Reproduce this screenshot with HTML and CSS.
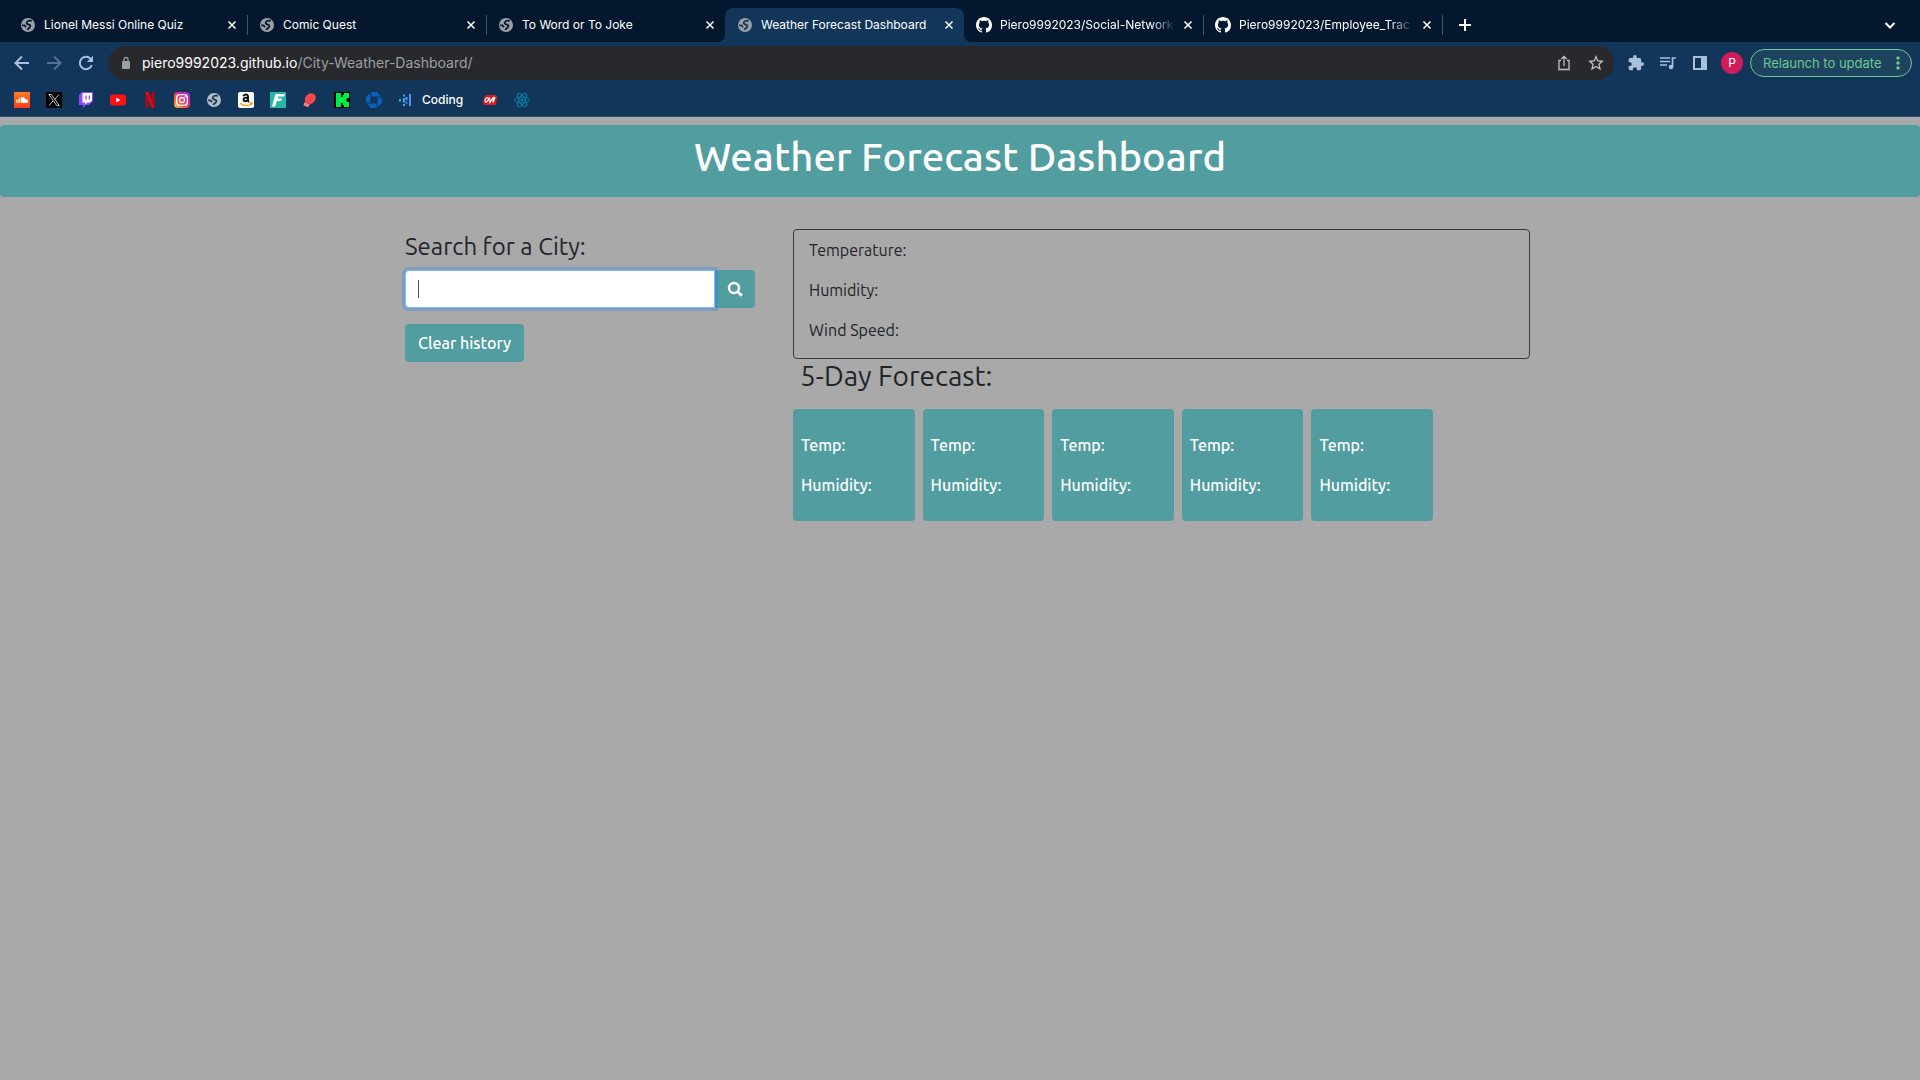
FILE: index.html
```html
<!DOCTYPE html>
<html lang="en">
<head>
<meta charset="utf-8">
<meta name="viewport" content="width=device-width, initial-scale=1">
<title>Weather Forecast Dashboard</title>
<link rel="stylesheet" href="styles.css">
</head>
<body>
<svg class="defs" aria-hidden="true">
  <symbol id="globe" viewBox="0 0 14 14"><circle cx="7" cy="7" r="7" fill="currentColor"/><path class="land" d="M10.800 2.900C8.500 2.300 6.200 3 5.700 4.500C5.400 6 6.800 6.400 8 6.600C9.700 7 9.800 8.300 8.800 9.400C7.900 10.400 6.800 10.700 6.400 12M1.200 7.300H3.500L5 9.300" fill="none" stroke-width="1.700"/></symbol>
  <symbol id="close" viewBox="0 0 10 10"><path d="M1.500 1.500l7 7m0-7l-7 7" fill="none" stroke="currentColor" stroke-width="1.500"/></symbol>
  <symbol id="github" viewBox="0 0 16 16"><path fill="currentColor" d="M8 0C3.580 0 0 3.580 0 8c0 3.540 2.290 6.530 5.470 7.590.4.070.550-.170.550-.380 0-.190-.010-.820-.010-1.490-2.010.370-2.530-.490-2.690-.940-.090-.230-.480-.940-.820-1.130-.280-.150-.680-.520-.010-.530.630-.010 1.080.580 1.230.820.720 1.210 1.870.870 2.330.660.070-.520.280-.870.510-1.070-1.780-.200-3.640-.890-3.640-3.950 0-.870.310-1.590.820-2.150-.080-.200-.360-1.020.080-2.120 0 0 .670-.210 2.200.820.640-.180 1.320-.270 2-.270s1.360.090 2 .270c1.530-1.040 2.200-.820 2.200-.820.440 1.100.160 1.920.080 2.120.510.560.820 1.270.820 2.150 0 3.070-1.870 3.750-3.650 3.950.290.250.540.730.540 1.480 0 1.070-.010 1.930-.010 2.200 0 .210.150.460.550.380A8.010 8.010 0 0 0 16 8c0-4.420-3.580-8-8-8z"/></symbol>
</svg>

<header class="chrome">
  <nav class="tabs" aria-label="Tabs">
    <div class="tab"><svg class="fav globe"><use href="#globe"/></svg><span class="tab-title">Lionel Messi Online Quiz</span><button class="tab-close" aria-label="Close tab"><svg><use href="#close"/></svg></button></div>
    <div class="tab"><svg class="fav globe"><use href="#globe"/></svg><span class="tab-title">Comic Quest</span><button class="tab-close" aria-label="Close tab"><svg><use href="#close"/></svg></button></div>
    <div class="tab before-active"><svg class="fav globe"><use href="#globe"/></svg><span class="tab-title">To Word or To Joke</span><button class="tab-close" aria-label="Close tab"><svg><use href="#close"/></svg></button></div>
    <div class="tab active"><svg class="fav globe"><use href="#globe"/></svg><span class="tab-title">Weather Forecast Dashboard</span><button class="tab-close" aria-label="Close tab"><svg><use href="#close"/></svg></button></div>
    <div class="tab"><svg class="fav"><use href="#github"/></svg><span class="tab-title long">Piero9992023/Social-Network</span><button class="tab-close" aria-label="Close tab"><svg><use href="#close"/></svg></button></div>
    <div class="tab"><svg class="fav"><use href="#github"/></svg><span class="tab-title long">Piero9992023/Employee_Trac</span><button class="tab-close" aria-label="Close tab"><svg><use href="#close"/></svg></button></div>
    <button class="new-tab" aria-label="New tab"><svg viewBox="0 0 14 14"><path d="M7 1v12M1 7h12" stroke="currentColor" stroke-width="2"/></svg></button>
    <button class="tab-search" aria-label="Search tabs"><svg viewBox="0 0 12 12"><path d="M1.500 4L6 8.500 10.500 4" fill="none" stroke="currentColor" stroke-width="2"/></svg></button>
  </nav>

  <div class="toolbar">
    <button class="nav-btn" aria-label="Back"><svg viewBox="0 0 16 16"><path d="M15 8H2M8 1.500L1.500 8 8 14.500" fill="none" stroke="currentColor" stroke-width="2"/></svg></button>
    <button class="nav-btn dim" aria-label="Forward"><svg viewBox="0 0 16 16"><path d="M1 8h13M8 1.500L14.500 8 8 14.500" fill="none" stroke="currentColor" stroke-width="2"/></svg></button>
    <button class="nav-btn" aria-label="Reload"><svg viewBox="0 0 16 16"><path d="M13.800 10.200A6.200 6.200 0 1 1 12.600 3.800" fill="none" stroke="currentColor" stroke-width="2"/><path d="M15 0.800V7H8.800Z" fill="currentColor"/></svg></button>
    <div class="address">
      <svg class="lock" viewBox="0 0 10 14"><rect x="1" y="5" width="8" height="8" rx="1" fill="currentColor"/><path d="M3 5V3.500a2 2 0 0 1 4 0V5" fill="none" stroke="currentColor" stroke-width="1.300"/></svg>
      <span class="url">piero9992023.github.io<span class="path">/City-Weather-Dashboard/</span></span>
      <button class="addr-btn" aria-label="Share"><svg viewBox="0 0 16 16"><path d="M5 5.500H3v9h10v-9h-2M8 11V1.500M5.300 4L8 1.400 10.700 4" fill="none" stroke="currentColor" stroke-width="1.300"/></svg></button>
      <button class="addr-btn" aria-label="Bookmark this page"><svg viewBox="2 2 20 20"><path fill="currentColor" d="M22 9.240l-7.190-.62L12 2 9.190 8.630 2 9.240l5.460 4.730L5.820 21 12 17.270 18.180 21l-1.630-7.030L22 9.240zM12 15.400l-3.760 2.270 1-4.280-3.320-2.880 4.380-.38L12 6.100l1.710 4.040 4.380.38-3.320 2.880 1 4.280L12 15.400z"/></svg></button>
    </div>
    <div class="actions">
      <button class="nav-btn" aria-label="Extensions"><svg viewBox="1 1 22 22"><path fill="currentColor" d="M20.500 11H19V7c0-1.100-.9-2-2-2h-4V3.500a2.500 2.500 0 0 0-5 0V5H4c-1.100 0-2 .9-2 2v3.800h1.500c1.500 0 2.700 1.200 2.700 2.700S5 16.200 3.500 16.200H2V20c0 1.100.9 2 2 2h3.800v-1.500c0-1.500 1.200-2.700 2.700-2.700s2.700 1.200 2.700 2.700V22H17c1.100 0 2-.9 2-2v-4h1.500a2.500 2.500 0 0 0 0-5z"/></svg></button>
      <button class="nav-btn" aria-label="Media controls"><svg viewBox="0 0 16 16"><path d="M0 3h10M0 6.500h10M0 10h7M12.500 12V3H16" fill="none" stroke="currentColor" stroke-width="1.700"/><circle cx="11" cy="12" r="2.300" fill="currentColor"/></svg></button>
      <button class="nav-btn" aria-label="Side panel"><svg viewBox="0 0 16 16"><path fill="currentColor" fill-rule="evenodd" d="M1 1h14v14H1ZM3 3v10h6V3Z"/></svg></button>
      <button class="avatar" aria-label="Profile">P</button>
      <button class="relaunch">Relaunch to update<svg viewBox="0 0 4 14"><g fill="currentColor"><circle cx="2" cy="2" r="1.700"/><circle cx="2" cy="7" r="1.700"/><circle cx="2" cy="12" r="1.700"/></g></svg></button>
    </div>
  </div>

  <nav class="bookmarks" aria-label="Bookmarks">
    <a href="#" aria-label="SoundCloud"><svg viewBox="0 0 16 16"><defs><linearGradient id="sc" x2="0" y2="1"><stop stop-color="#ff7d26"/><stop offset="1" stop-color="#ff3a12"/></linearGradient></defs><path fill="url(#sc)" d="M0 0h16v16H0z"/><path d="M2.500 8v2.500M4.200 7v4M5.900 6v5" stroke="#fff"/><path fill="#fff" d="M7 5.300C9 4.200 11 5.500 11.200 7.300 13 6.700 14 8 14 9.200S13 11 12 11H7Z"/></svg></a>
    <a href="#" aria-label="X"><svg viewBox="0 0 16 16"><path d="M0 0h16v16H0z"/><path d="M2.800 2.500h2.500l8 11h-2.500ZM13 2.500L8.800 7.300M7 9L3 13.500" fill="none" stroke="#ddd" stroke-width=".9"/></svg></a>
    <a href="#" aria-label="Twitch"><svg viewBox="0 0 16 16"><path fill="#9146ff" d="M4 0L1 3v10h4v3l3-3h3l4-4V0Z"/><path fill="#fff" d="M4.500 1H14v7.500L12 10.500H9.500L7 12.500v-2H4.500Z"/><path d="M8 3.500v4M11.300 3.500v4" stroke="#9146ff" stroke-width="1.300"/></svg></a>
    <a href="#" aria-label="YouTube"><svg viewBox="0 0 16 16"><rect y="2.500" width="16" height="11" rx="3" fill="#f11"/><path fill="#fff" d="M6.300 5.700v4.600L10.600 8Z"/></svg></a>
    <a href="#" aria-label="Netflix"><svg viewBox="0 0 16 16"><path fill="#a70d16" d="M3.500 0h3v15.600l-3 .4ZM9.500 0h3v16l-3-.4Z"/><path fill="#e50914" d="M3.500 0h3l6 16-3-.4Z"/></svg></a>
    <a href="#" aria-label="Instagram"><svg viewBox="0 0 16 16"><defs><linearGradient id="ig" x1="0" y1="1" x2="1" y2="0"><stop stop-color="#ffc83d"/><stop offset=".35" stop-color="#ff543f"/><stop offset=".65" stop-color="#e02597"/><stop offset="1" stop-color="#8134ef"/></linearGradient></defs><rect width="16" height="16" rx="4" fill="url(#ig)"/><g fill="none" stroke="#fff" stroke-width="1.300"><rect x="2.700" y="2.700" width="10.600" height="10.600" rx="3"/><circle cx="8" cy="8" r="2.500"/></g><circle cx="11.200" cy="4.800" r=".7" fill="#fff"/></svg></a>
    <a href="#" aria-label="Website"><svg class="world" viewBox="-1 -1 16 16"><use href="#globe" width="14" height="14"/></svg></a>
    <a href="#" aria-label="Amazon"><svg viewBox="0 0 16 16"><rect width="16" height="16" rx="2" fill="#fff"/><path d="M5.300 4.300C6 2 10 1.700 10 4.500V8c0 1 .3 1.300 1 2M10 5.500C7 5.500 5.500 6.200 5.500 7.800s3 2.200 4.400-.3" fill="none" stroke="#111" stroke-width="1.900"/><path d="M2 11.200c4 3 8.500 2.800 11.500.8M12 11l2-.2-.5 2" fill="none" stroke="#f90" stroke-width="1.300"/></svg></a>
    <a href="#" aria-label="Fiverr"><svg viewBox="0 0 16 16"><path fill="#25b8a4" d="M0 0h16v16H0z"/><path fill="#fff" d="M5.500 2H15l-1 2.500H8.500L7.900 6.500H12l-1 2.500H7L5 14.500H2Z"/></svg></a>
    <a href="#" aria-label="Boxing"><svg viewBox="0 0 16 16"><path fill="#f6494d" d="M3.500 5C5 1.500 9.500.3 12 2c2.500 1.800 2.300 6-.3 8.200-1.200 1-2 1.500-3.200 1.800L4 10.500C2.300 9 2.600 6.800 3.500 5Z"/><path fill="#ff7774" d="M2.500 10l5.500 2.200-2 3L1.500 13.500Z"/><path d="M6 5c2 1 4-.5 5 1M5 7.500c1.500.5 3 0 4 .5" fill="none" stroke="#d43843" stroke-width=".7"/></svg></a>
    <a href="#" aria-label="Kick"><svg viewBox="0 0 16 16"><path d="M0 0h16v16H0z"/><path fill="#00ed45" d="M2 1h5v4h1.500V3H10V1h5v5h-2v1.500h-1v1h1V10h2v5h-5v-2H8.500v-2H7v4H2Z"/></svg></a>
    <a href="#" aria-label="Chase"><svg viewBox="0 0 16 16"><g fill="#0b60bb"><path d="M5.500 0H11l4 4.500H5.500Z"/><path d="M16 5.500V11l-4.500 4V5.500Z"/><path d="M10.500 16H5l-4-4.500h9.500Z"/><path d="M0 10.500V5l4.500-4v9.500Z"/></g></svg></a>
    <a href="#" class="labelled"><svg viewBox="0 0 16 16"><g fill="none" stroke-width="2"><path stroke="#28b5e8" d="M2 7v2.500M6 2.500v2M6 6v4.500M6 12v2"/><path stroke="#5c9cff" d="M8.500 5v3"/><path stroke="#367adf" d="M8.500 9.500v2.500"/><path stroke="#5c8cf5" d="M12 2v12"/></g></svg>Coding</a>
    <a href="#" aria-label="Mega"><svg viewBox="0 0 16 16"><path fill="#d91c24" d="M4 3h10l1 2-1 8H9L2 13 1 11 2 5Z"/><path d="M6 7C6 5 3 6 3 8.500S5.500 11 7.500 5.500L8 10.500 11.500 5l-.5 5.500M13 5l-2 5.500" fill="none" stroke="#fff" stroke-width="1.200"/></svg></a>
    <a href="#" aria-label="React"><svg viewBox="0 0 16 16"><g fill="none" stroke="#087ea4"><ellipse cx="8" cy="8" rx="7.500" ry="3"/><ellipse cx="8" cy="8" rx="7.500" ry="3" transform="rotate(60 8 8)"/><ellipse cx="8" cy="8" rx="7.500" ry="3" transform="rotate(120 8 8)"/></g><circle cx="8" cy="8" r="1.500" fill="#087ea4"/></svg></a>
  </nav>
</header>

<main class="page">
  <div class="banner"><h1>Weather Forecast Dashboard</h1></div>
  <div class="container">
    <section class="search">
      <label class="search-label" for="city">Search for a City:</label>
      <div class="input-group">
        <input id="city" type="text" autocomplete="off">
        <span class="caret"></span>
        <button class="btn search-btn" aria-label="Search"><svg viewBox="0 0 16 16"><circle cx="7" cy="7" r="5" fill="none" stroke="currentColor" stroke-width="2.400"/><path d="M10.500 10.500l4.300 4.300" stroke="currentColor" stroke-width="2.800"/></svg></button>
      </div>
      <button class="btn clear-btn">Clear history</button>
    </section>
    <section class="weather">
      <div class="current">
        <p>Temperature:</p>
        <p>Humidity:</p>
        <p>Wind Speed:</p>
      </div>
      <h2>5-Day Forecast:</h2>
      <div class="forecast">
        <div class="day"><p>Temp:</p><p>Humidity:</p></div>
        <div class="day"><p>Temp:</p><p>Humidity:</p></div>
        <div class="day"><p>Temp:</p><p>Humidity:</p></div>
        <div class="day"><p>Temp:</p><p>Humidity:</p></div>
        <div class="day"><p>Temp:</p><p>Humidity:</p></div>
      </div>
    </section>
  </div>
</main>
</body>
</html>
```
FILE: styles.css
```css
* { box-sizing: border-box; }

body {
  margin: 0;
  min-height: 100vh;
  background: #a9a9a9;
  color: #212529;
  font: 16px/24px Ubuntu, "Noto Sans", sans-serif;
}

h1, h2, p { margin: 0; }
.defs { display: none; }

button {
  margin: 0;
  padding: 0;
  border: 0;
  background: none;
  color: inherit;
  font: inherit;
}

svg { display: block; flex: none; }

/* Browser frame */
.chrome {
  background: #12355a;
  border-bottom: 1px solid #2d4d74;
  color: #fff;
  font: 12px/16px Inter, sans-serif;
}

.tabs {
  display: flex;
  height: 42px;
  padding: 8px 24px 0 8px;
  background: #03182e;
}

.tab {
  position: relative;
  display: flex;
  align-items: center;
  flex: 0 1 239px;
  min-width: 0;
  height: 34px;
  padding: 0 10px 0 12px;
  gap: 8px;
}

.tab::after {
  content: "";
  position: absolute;
  right: -1px;
  top: 7px;
  width: 1px;
  height: 20px;
  background: #465467;
}

.tab.before-active::after { display: none; }

.tab.active {
  background: #12355a;
  border-radius: 8px 8px 0 0;
}

/* Curved feet that join the active tab to the toolbar */
.tab.active::before, .tab.active::after {
  content: "";
  position: absolute;
  top: auto;
  bottom: 0;
  width: 8px;
  height: 8px;
}

.tab.active::before { left: -8px; background: radial-gradient(circle at 0 0, transparent 8px, #12355a 8px); }
.tab.active::after { right: -8px; background: radial-gradient(circle at 100% 0, transparent 8px, #12355a 8px); }

.fav { width: 16px; height: 16px; }
.fav.globe { padding: 1px; color: #9aa0a6; }
.land { stroke: var(--cut, #03182e); }
.active .fav, .world { --cut: #12355a; }

.tab-title {
  flex: 1;
  min-width: 0;
  overflow: hidden;
  white-space: nowrap;
}

.tab-title.long { mask-image: linear-gradient(to right, #000 calc(100% - 24px), transparent); }

.tab-close svg { width: 10px; height: 10px; }
.new-tab { padding: 0 16px; }
.new-tab svg { width: 14px; height: 14px; }
.tab-search { margin-left: auto; }
.tab-search svg { width: 12px; height: 12px; }

.toolbar {
  display: flex;
  align-items: center;
  gap: 16px;
  padding: 4px 8px 4px 14px;
}

.nav-btn { color: #a8c0dc; }
.nav-btn svg { width: 16px; height: 16px; }
.nav-btn.dim { color: #55718f; }

.address {
  display: flex;
  align-items: center;
  flex: 1;
  min-width: 0;
  height: 34px;
  margin: 0 -2px;
  padding: 0 10px 0 12px;
  border-radius: 17px;
  background: #28292c;
  font-size: 14px;
}

.lock { width: 12px; height: 14px; color: #9aa0a6; }
.url { flex: 1; min-width: 0; margin-left: 10px; overflow: hidden; white-space: nowrap; }
.path { color: #9aa0a6; }
.addr-btn { margin-left: 16px; color: #c0c1c3; }
.addr-btn svg { width: 16px; height: 16px; }

.actions { display: flex; align-items: center; gap: 16px; }

.avatar {
  width: 22px;
  height: 22px;
  margin: 0 -9px 0 -3px;
  border-radius: 11px;
  background: #d01c5b;
}

.relaunch {
  display: flex;
  align-items: center;
  justify-content: space-between;
  width: 162px;
  height: 28px;
  padding: 0 11px 0 12px;
  border: 1px solid #6fc795;
  border-radius: 14px;
  background: #1d435f;
  color: #6fc795;
  font-size: 13px;
  white-space: nowrap;
}

.relaunch svg { width: 4px; height: 14px; }

.bookmarks {
  display: flex;
  align-items: center;
  gap: 16px;
  height: 32px;
  padding: 0 14px;
}

.bookmarks a { color: #fff; text-decoration: none; }
.bookmarks svg { width: 16px; height: 16px; }
.bookmarks .world { color: #b5bcc6; }

.labelled {
  display: flex;
  align-items: center;
  gap: 8px;
  margin-right: 3px;
  font-weight: 500;
}

/* Dashboard */
.banner {
  margin-top: 8px;
  padding: 8px 8px 16px;
  border-radius: 4px;
  background: #519d9f;
  color: #fff;
  text-align: center;
}

h1 { font-size: 40px; line-height: 48px; font-weight: 500; }

.container {
  display: flex;
  gap: 38px;
  max-width: 1140px;
  margin: 32px auto 0;
  padding-left: 15px;
}

.search { flex: 0 1 350px; }

.search-label {
  display: block;
  margin-bottom: 9px;
  padding-top: 3px;
  font-size: 24px;
  line-height: 29px;
}

.input-group { position: relative; display: flex; }

.input-group input {
  position: relative;
  z-index: 1;
  flex: 1;
  min-width: 0;
  height: 38px;
  padding: 6px 12px;
  border: 1px solid #80bdff;
  border-radius: 4px 0 0 4px;
  outline: 0;
  background: #fff;
  box-shadow: 0 0 0 3px rgba(0, 123, 255, .25);
  color: #495057;
  font: inherit;
}

.caret {
  position: absolute;
  left: 13px;
  top: 10px;
  z-index: 2;
  width: 1px;
  height: 18px;
  background: #495057;
}

.btn {
  height: 38px;
  padding: 0 13px;
  border-radius: 4px;
  background: #519d9f;
  color: #fff;
  font-weight: 500;
}

.search-btn { padding: 0 12px; border-radius: 0 4px 4px 0; }
.search-btn svg { width: 16px; height: 16px; }
.clear-btn { margin-top: 16px; }

.weather { flex: 1; min-width: 0; }

.current {
  padding: 8px 15px 0;
  border: 1px solid #343a40;
  border-radius: 4px;
}

.current p, .day p { margin-bottom: 16px; }

h2 {
  padding: 0 7px;
  font-size: 28px;
  line-height: 34px;
  font-weight: 400;
}

.forecast {
  display: flex;
  gap: 8px;
  max-width: 640px;
  margin-top: 16px;
}

.day {
  flex: 1;
  min-width: 0;
  padding: 24px 8px 8px;
  border-radius: 4px;
  background: #519d9f;
  color: #fff;
  font-weight: 500;
}
```
